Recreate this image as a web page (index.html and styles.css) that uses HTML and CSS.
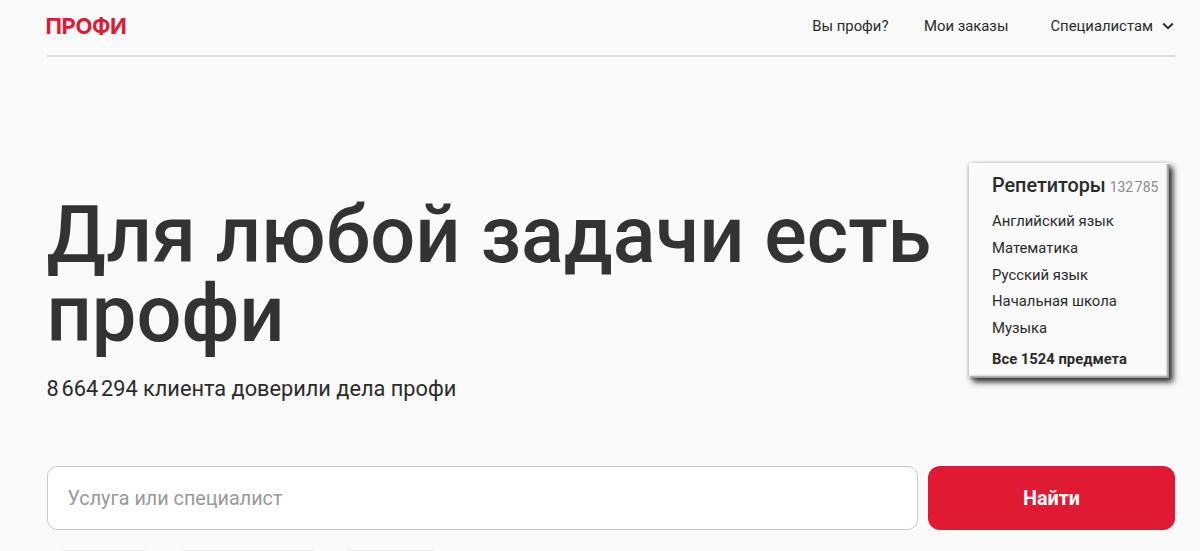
FILE: index.html
```html
<!DOCTYPE html>
<html lang="ru">
<head>
  <meta charset="UTF-8">
  <meta name="viewport" content="width=device-width, initial-scale=1.0">
  <title>Профи</title>
  <link rel="stylesheet" href="styles.css">
</head>
<body>
<header class="header">
  <a class="logo" href="#">ПРОФИ</a>
  <nav class="nav">
    <a class="nav-link" href="#">Вы профи?</a>
    <a class="nav-link" href="#">Мои заказы</a>
    <a class="nav-link nav-more" href="#">Специалистам
      <svg class="arrow" width="12" height="8" viewBox="0 0 12 8"><path d="M1.2 1.5L6 6.2L10.8 1.5" fill="none" stroke="#2b2b2b" stroke-width="2"/></svg>
    </a>
  </nav>
</header>

<main>
  <section class="hero">
    <div class="hero-text">
      <h1 class="title">Для любой задачи есть профи</h1>
      <p class="subtitle"><span class="number">8 664 294</span> клиента доверили дела профи</p>
    </div>
    <aside class="card">
      <h2 class="card-title">Репетиторы <span class="count number">132 785</span></h2>
      <ul class="card-list">
        <li>Английский язык</li>
        <li>Математика</li>
        <li>Русский язык</li>
        <li>Начальная школа</li>
        <li>Музыка</li>
      </ul>
      <a class="card-all" href="#">Все 1524 предмета</a>
    </aside>
  </section>

  <form class="search">
    <input class="search-input" type="text" placeholder="Услуга или специалист">
    <button class="search-btn" type="button">Найти</button>
  </form>

  <div class="tags">
    <span class="tag tag-small"></span>
    <span class="tag tag-big"></span>
    <span class="tag tag-small"></span>
  </div>
</main>
</body>
</html>
```

FILE: styles.css
```css
* {
  box-sizing: border-box;
}

body {
  margin: 0;
  padding: 0 25px 0 46.5px;
  background-color: #fafafa;
  color: #2b2b2b;
  font-family: Roboto, "Liberation Sans", sans-serif;
}

a {
  color: inherit;
  text-decoration: none;
}

.header {
  display: flex;
  justify-content: space-between;
  align-items: center;
  height: 57px;
  padding-bottom: 3px;
  border-bottom: 2px solid #dddde3;
}

.logo {
  margin-left: -1px;
  color: #e01a33;
  font-family: Inter, sans-serif;
  font-size: 22px;
  font-weight: 700;
  letter-spacing: -0.4px;
}

.nav {
  display: flex;
  gap: 35.5px;
  font-size: 14.85px;
}

.nav-more {
  display: flex;
  align-items: center;
  gap: 9px;
  margin-left: 6.5px;
  padding-right: 1px;
}

.hero {
  display: flex;
  justify-content: space-between;
  height: 409px;
}

.hero-text {
  width: 900px;
  padding-top: 138px;
}

.title {
  margin: 0;
  color: #333;
  font-size: 79.36px;
  line-height: 79px;
  font-weight: 500;
}

.subtitle {
  margin: 21px 0 0;
  font-size: 21.75px;
  line-height: 30px;
}

/* narrow gaps between digit groups */
.number {
  word-spacing: -0.12em;
}

.card {
  width: 200px;
  height: 215px;
  margin: 106px 6px 0 0;
  padding: 9px 0 0 23px;
  white-space: nowrap;
  box-shadow: inset 1px 1px 0 #fff, inset -2px -2px 2px #999, 4px 4px 6px #333, 0 1px 4px rgba(0, 0, 0, 0.35);
  background-color: #fafafa;
}

.card-title {
  margin: 0 0 7px;
  font-size: 19.8px;
  line-height: 27px;
  font-weight: 500;
}

.count {
  color: #8a8a94;
  font-size: 13.9px;
  font-weight: 400;
  margin-left: -1px;
}

.card-list {
  margin: 0;
  padding: 0;
  list-style: none;
  font-size: 14.85px;
  line-height: 26.8px;
}

.card-all {
  display: block;
  margin-top: 4px;
  font-size: 14.8px;
  line-height: 27px;
  font-weight: 700;
}

.search {
  display: flex;
  gap: 10px;
}

.search-input {
  flex: 1;
  height: 64px;
  padding: 0 20px;
  border: 1px solid #c9c9d4;
  border-radius: 10px;
  background-color: #fff;
  font-family: inherit;
  font-size: 19.8px;
}

.search-input::placeholder {
  color: #999;
}

.search-btn {
  width: 247px;
  height: 64px;
  border: none;
  border-radius: 12px;
  background-color: #e01a33;
  color: #fff;
  font-family: inherit;
  font-size: 19.8px;
  font-weight: 700;
}

/* upper edge of the tag row under the search form */
.tags {
  display: flex;
  gap: 32px;
  padding: 20px 0 0 13px;
}

.tag {
  height: 1px;
  background-color: #efefef;
}

.tag-small {
  width: 88px;
}

.tag-big {
  width: 135px;
}
```
